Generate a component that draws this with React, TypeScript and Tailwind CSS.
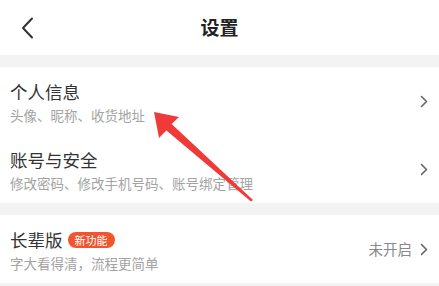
import React from "react";

const Chevron = ({ className = "" }: { className?: string }) => (
  <svg width="8" height="13" viewBox="0 0 8 13" className={className} fill="none">
    <path d="M1.5 1.5 L6.5 6.5 L1.5 11.5" stroke="#666" strokeWidth="1.6" strokeLinecap="round" strokeLinejoin="round" />
  </svg>
);

function Row({ title, sub, right }: { title: React.ReactNode; sub: string; right?: React.ReactNode }) {
  return (
    <div className="h-[68px] flex items-center pl-[10px] pr-[11px]">
      <div className="flex-1 flex flex-col pt-[2px]">
        <div className="text-[17.5px] leading-[22px] text-[#333]">{title}</div>
        <div className="text-[13.5px] leading-[18px] text-[#a3a3a3] mt-[3px] whitespace-nowrap">{sub}</div>
      </div>
      {right}
      <Chevron />
    </div>
  );
}

export default function App() {
  return (
    <div
      className="relative w-[439px] h-[286px] bg-[#f3f3f3] overflow-hidden"
      style={{ fontFamily: '"Noto Sans CJK SC", "Noto Sans", sans-serif' }}
    >
      <div className="h-[55px] bg-white flex items-center relative">
        <svg width="14" height="22" viewBox="0 0 14 22" className="ml-[20px]" fill="none">
          <path d="M12 1.5 L3 11 L12 20.5" stroke="#333" strokeWidth="2" strokeLinecap="round" strokeLinejoin="round" />
        </svg>
        <div className="absolute left-0 right-0 text-center text-[19px] font-bold text-[#222] pointer-events-none">设置</div>
      </div>
      <div className="h-[12px]" />
      <div className="bg-white">
        <Row title="个人信息" sub="头像、昵称、收货地址" />
        <Row title="账号与安全" sub="修改密码、修改手机号码、账号绑定管理" />
      </div>
      <div className="h-[12px]" />
      <div className="bg-white">
        <Row
          title={
            <div className="flex items-center">
              <span>长辈版</span>
              <span className="ml-[5px] h-[16px] px-[7px] rounded-full bg-[#f0552d] text-white text-[11px] leading-[16px]">新功能</span>
            </div>
          }
          sub="字大看得清，流程更简单"
          right={<span className="text-[14.5px] text-[#888] mr-[8px]">未开启</span>}
        />
      </div>
      <svg className="absolute left-0 top-0" width="439" height="286" viewBox="0 0 439 286">
        <polygon
          points="154,112 159,138 166.4,130.5 251,201.5 253,200 171.6,124 179,117"
          fill="#f03a3a"
        />
      </svg>
    </div>
  );
}
